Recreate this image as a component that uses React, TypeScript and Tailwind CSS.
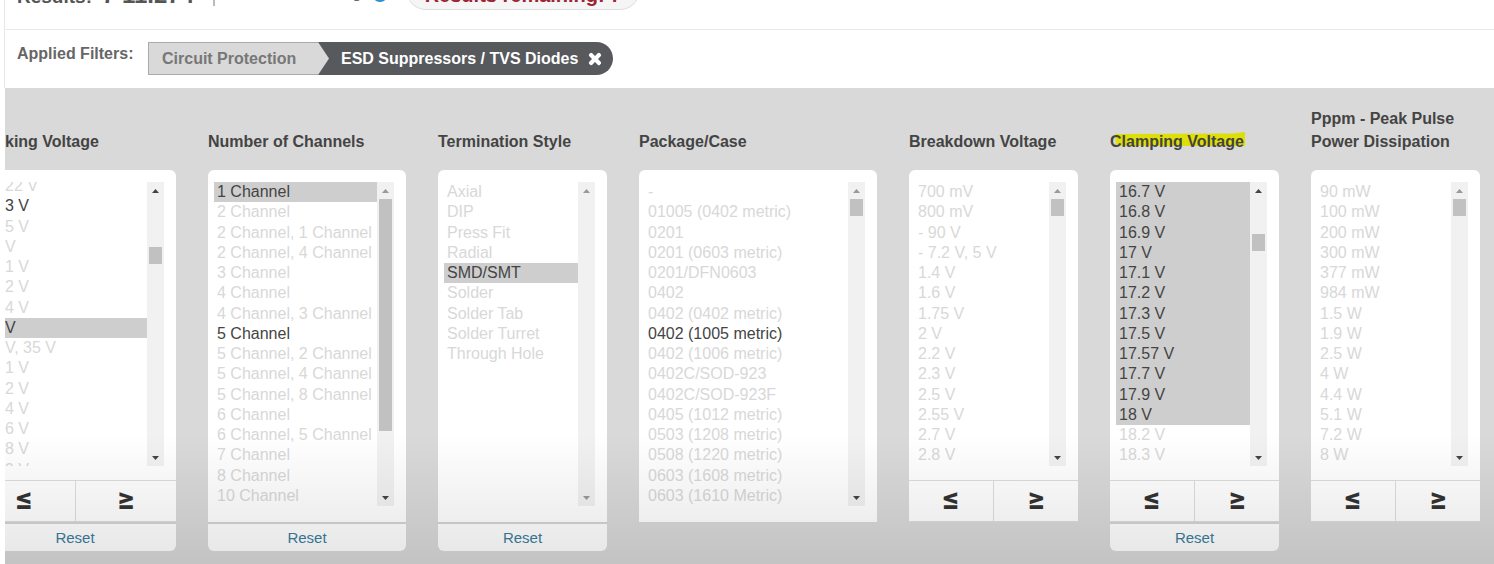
import { useEffect, useId, useRef } from "react";
import type { ReactNode } from "react";
import clsx from "clsx";
import { FaTimes } from "react-icons/fa";

type Filter = {
  title: string;
  highlighted?: boolean;
  width: string;
  options: string[];
  enabled?: string[];
  selected?: string[];
  rows: "short" | "tall";
  thumb?: string;
  atTop?: boolean;
  atEnd?: boolean;
  compare?: boolean;
  reset?: boolean;
  bleed?: boolean;
  scrolled?: number;
};

const clampSelected = [
  "16.7 V", "16.8 V", "16.9 V", "17 V", "17.1 V", "17.2 V",
  "17.3 V", "17.5 V", "17.57 V", "17.7 V", "17.9 V", "18 V",
];

const filters: Filter[] = [
  {
    title: "king Voltage",
    width: "w-[202px]",
    bleed: true,
    scrolled: 6,
    options: [
      "22 V", "3 V", "5 V", "V", "1 V", "2 V", "4 V", " V", "V, 35 V",
      "1 V ", "2 V ", "4 V ", "6 V", "8 V", "9 V",
    ],
    enabled: ["3 V"],
    selected: [" V"],
    rows: "short",
    thumb: "mt-[48px] h-[17px]",
    compare: true,
    reset: true,
  },
  {
    title: "Number of Channels",
    width: "w-[198px]",
    options: [
      "1 Channel", "2 Channel", "2 Channel, 1 Channel", "2 Channel, 4 Channel",
      "3 Channel", "4 Channel", "4 Channel, 3 Channel", "5 Channel",
      "5 Channel, 2 Channel", "5 Channel, 4 Channel", "5 Channel, 8 Channel",
      "6 Channel", "6 Channel, 5 Channel", "7 Channel", "8 Channel", "10 Channel",
    ],
    enabled: ["5 Channel"],
    selected: ["1 Channel"],
    rows: "tall",
    thumb: "h-[232px]",
    atTop: true,
    reset: true,
  },
  {
    title: "Termination Style",
    width: "w-[169px]",
    options: [
      "Axial", "DIP", "Press Fit", "Radial", "SMD/SMT",
      "Solder", "Solder Tab", "Solder Turret", "Through Hole",
    ],
    selected: ["SMD/SMT"],
    rows: "tall",
    atTop: true,
    atEnd: true,
    reset: true,
  },
  {
    title: "Package/Case",
    width: "w-[238px]",
    options: [
      "-", "01005 (0402 metric)", "0201", "0201 (0603 metric)", "0201/DFN0603",
      "0402", "0402 (0402 metric)", "0402 (1005 metric)", "0402 (1006 metric)",
      "0402C/SOD-923", "0402C/SOD-923F", "0405 (1012 metric)",
      "0503 (1208 metric)", "0508 (1220 metric)", "0603 (1608 metric)",
      "0603 (1610 Metric)",
    ],
    enabled: ["0402 (1005 metric)"],
    rows: "tall",
    thumb: "h-[17px]",
    atTop: true,
  },
  {
    title: "Breakdown Voltage",
    width: "w-[169px]",
    options: [
      "700 mV", "800 mV", "- 90 V", "- 7.2 V, 5 V", "1.4 V", "1.6 V", "1.75 V",
      "2 V", "2.2 V", "2.3 V", "2.5 V", "2.55 V", "2.7 V", "2.8 V",
    ],
    rows: "short",
    thumb: "h-[17px]",
    atTop: true,
    compare: true,
  },
  {
    title: "Clamping Voltage",
    highlighted: true,
    width: "w-[169px]",
    options: [...clampSelected, "18.2 V", "18.3 V"],
    selected: clampSelected,
    rows: "short",
    thumb: "mt-[35px] h-[17px]",
    compare: true,
    reset: true,
  },
  {
    title: "Pppm - Peak Pulse Power Dissipation",
    width: "w-[169px]",
    options: [
      "90 mW", "100 mW", "200 mW", "300 mW", "377 mW", "984 mW", "1.5 W",
      "1.9 W", "2.5 W", "4 W", "4.4 W", "5.1 W", "7.2 W", "8 W",
    ],
    rows: "short",
    thumb: "h-[17px]",
    atTop: true,
    compare: true,
  },
];

function Arrow({ down, dim }: { down?: boolean; dim?: boolean }) {
  return (
    <span className="flex h-[17px] items-center justify-center">
      <svg width="7" height="4" viewBox="0 0 7 4" className={dim ? "fill-[#999]" : "fill-[#444]"}>
        <path d={down ? "M0 0h7L3.5 4z" : "M0 4h7L3.5 0z"} />
      </svg>
    </span>
  );
}

function ScrollTrack({ filter }: { filter: Filter }) {
  return (
    <div className="flex w-[17px] shrink-0 flex-col bg-[#f1f1f1]" aria-hidden="true">
      <Arrow dim={filter.atTop} />
      <div className="flex-1 px-[2px]">
        {filter.thumb && <div className={clsx("bg-[#c1c1c1]", filter.thumb)} />}
      </div>
      <Arrow down dim={filter.atEnd} />
    </div>
  );
}

function CompareButton({ label, children }: { label: string; children: ReactNode }) {
  return (
    <button
      type="button"
      aria-label={label}
      className="flex h-10 flex-1 items-center justify-center bg-white pb-[6px] font-[Roboto,sans-serif] text-[31px] leading-none font-black text-[#333]"
    >
      {children}
    </button>
  );
}

function FilterColumn({ filter }: { filter: Filter }) {
  const id = useId();
  const list = useRef<HTMLSelectElement>(null);

  useEffect(() => {
    if (list.current && filter.scrolled) list.current.scrollTop = filter.scrolled;
  }, [filter.scrolled]);

  return (
    <div className={clsx("flex shrink-0 flex-col", filter.width)}>
      <label
        htmlFor={id}
        className={clsx(
          "flex h-[46px] items-end text-[16px] leading-[23px] font-bold text-[#444]",
          filter.bleed && "pl-[31px]",
        )}
      >
        <span className="relative isolate">
          {filter.highlighted && (
            <svg
              className="absolute top-0 left-1 -z-10 h-4 w-[132px]"
              viewBox="0 0 132 16"
              preserveAspectRatio="none"
              aria-hidden="true"
            >
              <path d="M1 4 118 3.5 131 2v14H2z" fill="#dede08" />
            </svg>
          )}
          {filter.title}
        </span>
      </label>

      <div className="mt-[17px] overflow-hidden rounded-t-md bg-white pt-3">
        <div
          className={clsx(
            "mr-3 ml-[6px] flex",
            filter.rows === "tall" ? "mb-4 h-[324px]" : "mb-[15px] h-[284px]",
          )}
        >
          <select
            ref={list}
            id={id}
            multiple
            defaultValue={filter.selected ?? []}
            className="h-full min-w-0 flex-1 overflow-y-auto border-0 bg-white p-0 text-[16px] text-[#444] outline-none [scrollbar-width:none]"
          >
            {filter.options.map((option) => {
              const active =
                filter.selected?.includes(option) || filter.enabled?.includes(option);
              return (
                <option
                  key={option}
                  value={option}
                  disabled={!active}
                  className={clsx(
                    "h-5 min-h-0 pt-px pr-0 pb-0 leading-5 nth-[4n+2]:h-[21px]",
                    filter.bleed ? "pl-[25px]" : "pl-[3px]",
                    active ? "text-[#444]" : "text-[#d8d8d8]",
                  )}
                >
                  {option.trim()}
                </option>
              );
            })}
          </select>
          <ScrollTrack filter={filter} />
        </div>
        {filter.compare && (
          <div className="-mt-px flex gap-px border-t border-[#ddd] bg-[#ddd] pb-px">
            <CompareButton label="Less than or equal">≤</CompareButton>
            <CompareButton label="Greater than or equal">≥</CompareButton>
          </div>
        )}
      </div>
      {filter.reset && (
        <button
          type="button"
          className="h-[29px] rounded-b-md border-t-2 border-[#d4d4d4] bg-white text-[15px] leading-[26px] text-[#3a7d9e]"
        >
          Reset
        </button>
      )}
    </div>
  );
}

export default function App() {
  return (
    <div className="flex min-h-screen flex-col overflow-hidden bg-white pl-1 font-['Liberation_Sans',Arial,sans-serif]">
      <header className="h-[30px] overflow-hidden border-b border-l border-[#e8e8e8]">
        <div className="-mt-[26px] flex h-9 items-end whitespace-nowrap">
          <div className="mb-1 ml-3 flex w-[198px] items-baseline gap-[10px] border-r-2 border-[#bbb] leading-[18px] font-bold text-[#555]">
            <span className="text-[19px]">Results:</span>
            <span className="text-[24px]">7 11.274</span>
          </div>
          <span className="ml-[42px] pb-[7px] text-[16px] leading-5 text-[#666]">Smart Filtering</span>
          <span className="mb-2 ml-[11px] size-4 rounded-full bg-[#2b8fd0]" />
          <div className="ml-[18px] flex h-10 w-[234px] shrink-0 items-end justify-center rounded-full border border-[#ddd] bg-[#f5f5f5] pb-[2px] text-[20px] leading-6 font-bold text-[#9c2433]">
            Results remaining: 7
          </div>
        </div>
      </header>

      <nav
        aria-label="Applied filters"
        className="flex h-[58px] items-start border-l border-[#e8e8e8] pt-3 pl-3 text-[16px] leading-6 font-bold"
      >
        <span className="w-[131px] text-[#666]">Applied Filters:</span>
        <div className="flex h-[33px] items-center overflow-hidden rounded-r-full bg-[#57595d]">
          <a
            href="#circuit-protection"
            className="flex h-full w-[170px] items-center border border-r-0 border-[#aaa] bg-[#d9d9d9] pl-[13px] text-[#777]"
          >
            Circuit Protection
          </a>
          <svg width="12" height="33" viewBox="0 0 12 33" aria-hidden="true">
            <path d="M0 0 11 16.5 0 33z" fill="#d9d9d9" />
          </svg>
          <span className="pl-[11px] whitespace-nowrap text-white">ESD Suppressors / TVS Diodes</span>
          <button type="button" aria-label="Remove filter" className="mr-[10px] ml-[9px] text-white">
            <FaTimes size={16} stroke="currentColor" strokeWidth={40} />
          </button>
        </div>
      </nav>

      <main className="relative ml-px flex-1 overflow-hidden bg-[#d9d9d9] pt-[19px] pb-3">
        <div className="-ml-[31px] flex items-start gap-8">
          {filters.map((filter) => (
            <FilterColumn key={filter.title} filter={filter} />
          ))}
        </div>
        <div className="pointer-events-none absolute inset-x-0 bottom-0 h-[130px] bg-linear-to-b from-transparent to-black/10" />
      </main>
    </div>
  );
}
